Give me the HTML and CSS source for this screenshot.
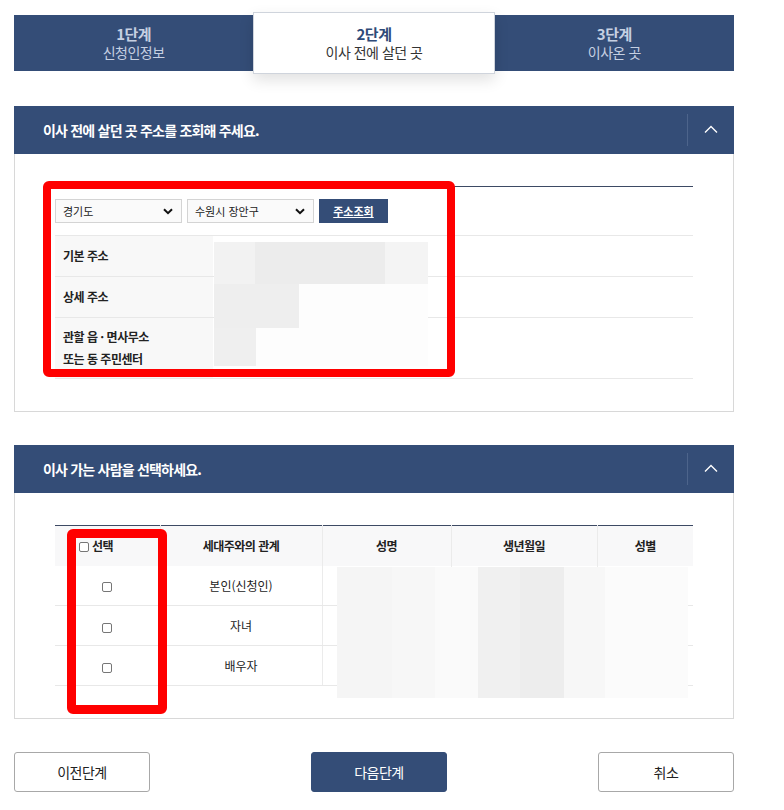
FILE: index.html
```html
<!DOCTYPE html>
<html lang="ko">
<head>
<meta charset="utf-8">
<title>전입신고</title>
<link rel="stylesheet" href="styles.css">
</head>
<body>
<div class="page">
  <div class="steps">
    <div class="step"><strong>1단계</strong><span>신청인정보</span></div>
    <div class="step active"><strong>2단계</strong><span>이사 전에 살던 곳</span></div>
    <div class="step"><strong>3단계</strong><span>이사온 곳</span></div>
  </div>

  <section class="panel">
    <div class="panel-head">
      <h2>이사 전에 살던 곳 주소를 조회해 주세요.</h2>
      <div class="toggle"><svg width="14" height="8" viewBox="0 0 14 8"><path d="M1 7.5L7 1.5L13 7.5" fill="none" stroke="#fff" stroke-width="1.4"/></svg></div>
    </div>
    <div class="panel-body p1">
      <div class="addr">
        <div class="addr-search">
          <div class="sel"><span>경기도</span><svg width="10" height="7" viewBox="0 0 10 7"><path d="M1 1.2L5 5.2L9 1.2" fill="none" stroke="#111" stroke-width="2"/></svg></div>
          <div class="sel"><span>수원시 장안구</span><svg width="10" height="7" viewBox="0 0 10 7"><path d="M1 1.2L5 5.2L9 1.2" fill="none" stroke="#111" stroke-width="2"/></svg></div>
          <button class="btn-search" type="button">주소조회</button>
        </div>
        <div class="addr-row"><div class="th">기본 주소</div><div class="td"></div></div>
        <div class="addr-row"><div class="th">상세 주소</div><div class="td"></div></div>
        <div class="addr-row tall"><div class="th">관할 읍 · 면사무소<br>또는 동 주민센터</div><div class="td"></div></div>

        <div class="redact r1">
          <i style="left:0;top:0;width:41px;height:42px;background:#f2f2f2"></i>
          <i style="left:41px;top:0;width:130px;height:42px;background:#ececec"></i>
          <i style="left:171px;top:0;width:43px;height:42px;background:#f4f4f4"></i>
          <i style="left:0;top:42px;width:85px;height:44px;background:#eeeeee"></i>
          <i style="left:0;top:86px;width:42px;height:38px;background:#efefef"></i>
        </div>
        <div class="mark m1"></div>
      </div>
    </div>
  </section>

  <section class="panel">
    <div class="panel-head">
      <h2>이사 가는 사람을 선택하세요.</h2>
      <div class="toggle"><svg width="14" height="8" viewBox="0 0 14 8"><path d="M1 7.5L7 1.5L13 7.5" fill="none" stroke="#fff" stroke-width="1.4"/></svg></div>
    </div>
    <div class="panel-body p2">
      <div class="people">
        <table>
          <colgroup>
            <col class="c1"><col class="c2"><col class="c3"><col class="c4"><col class="c5">
          </colgroup>
          <thead>
            <tr>
              <th class="sel-all"><input type="checkbox" class="chk"><span>선택</span></th>
              <th>세대주와의 관계</th>
              <th>성명</th>
              <th>생년월일</th>
              <th>성별</th>
            </tr>
          </thead>
          <tbody>
            <tr><td><input type="checkbox" class="chk"></td><td>본인(신청인)</td><td></td><td></td><td></td></tr>
            <tr><td><input type="checkbox" class="chk"></td><td>자녀</td><td></td><td></td><td></td></tr>
            <tr><td><input type="checkbox" class="chk"></td><td>배우자</td><td></td><td></td><td></td></tr>
          </tbody>
        </table>
        <div class="redact r2">
          <i style="left:0;top:0;width:55px;height:131px;background:#f5f5f5"></i>
          <i style="left:55px;top:0;width:43px;height:131px;background:#f7f7f7"></i>
          <i style="left:98px;top:0;width:43px;height:131px;background:#fafafa"></i>
          <i style="left:141px;top:0;width:42px;height:131px;background:#f0f0f0"></i>
          <i style="left:183px;top:0;width:44px;height:131px;background:#ededed"></i>
          <i style="left:227px;top:0;width:41px;height:131px;background:#f7f7f7"></i>
          <i style="left:268px;top:0;width:83px;height:131px;background:#fbfbfb"></i>
        </div>
        <div class="mark m2"></div>
      </div>
    </div>
  </section>

  <div class="actions">
    <button class="btn" type="button">이전단계</button>
    <button class="btn primary" type="button">다음단계</button>
    <button class="btn" type="button">취소</button>
  </div>
</div>
</body>
</html>
```

FILE: styles.css
```css
* { box-sizing: border-box; }
html, body { margin: 0; padding: 0; background: #fff; }
body {
  font-family: "Noto Sans CJK KR", "Noto Sans", sans-serif;
  color: #222;
  width: 784px;
}
.page {
  width: 720px;
  margin-left: 14px;
  padding-top: 15px;
}

/* steps */
.steps {
  display: flex;
  height: 56px;
  background: #344d77;
}
.step {
  flex: 1;
  display: flex;
  flex-direction: column;
  align-items: center;
  justify-content: center;
  color: #c6d0e2;
  line-height: 19px;
  letter-spacing: -0.5px;
}
.step strong { font-size: 15px; font-weight: 700; }
.step span { font-size: 14px; }
.step.active {
  background: #fff;
  margin: -3px 0;
  border: 1px solid #cfd4dc;
  box-shadow: 0 6px 14px rgba(0, 0, 0, 0.12);
  color: #333;
  position: relative;
  z-index: 1;
}
.step.active strong { color: #2e4a78; }

/* panels */
.panel { margin-top: 35px; }
.panel + .panel { margin-top: 33px; }
.panel-head {
  height: 48px;
  background: #344d77;
  display: flex;
  align-items: center;
  padding-left: 29px;
}
.panel-head h2 {
  flex: 1;
  margin: 0;
  font-size: 14px;
  font-weight: 700;
  color: #fff;
  letter-spacing: -0.8px;
}
.toggle {
  width: 47px;
  height: 32px;
  border-left: 1px solid #4d648b;
  display: flex;
  align-items: center;
  justify-content: center;
}
.toggle svg { margin-top: -2px; }
.panel-body {
  border: 1px solid #d8d8d8;
  border-top: 0;
  padding: 32px 40px 32px 40px;
}

/* address table */
.addr {
  position: relative;
  border-top: 1px solid #3d4a64;
}
.addr-search {
  height: 49px;
  display: flex;
  align-items: center;
  gap: 5px;
  border-bottom: 1px solid #e8e8e8;
}
.sel {
  width: 127px;
  height: 24px;
  border: 1px solid #d4d4d4;
  background: #fafafa;
  display: flex;
  align-items: center;
  justify-content: space-between;
  padding: 0 8px 0 7px;
  font-size: 11px;
  color: #222;
}
.btn-search {
  width: 69px;
  height: 24px;
  border: 0;
  background: #344d77;
  color: #fff;
  font-family: inherit;
  font-size: 11px;
  font-weight: 700;
  text-decoration: underline;
  padding: 0;
}
.addr-row {
  display: flex;
  height: 41px;
  border-bottom: 1px solid #e8e8e8;
}
.addr-row.tall { height: 61px; }
.addr-row .th {
  width: 158px;
  background: #f8f8f8;
  padding-left: 8px;
  display: flex;
  align-items: center;
  font-size: 12px;
  font-weight: 700;
  color: #222;
  line-height: 22px;
  letter-spacing: -0.5px;
}
.addr-row .td { flex: 1; }

.redact {
  position: absolute;
  background: #fdfdfd;
}
.redact i { position: absolute; display: block; }
.r1 { left: 159px; top: 55px; width: 214px; height: 124px; }
.r2 { left: 282px; top: 42px; width: 351px; height: 131px; }

.mark {
  position: absolute;
  border: 8px solid #ff0000;
  border-radius: 6px;
}
.m1 { left: -12px; top: -6px; width: 412px; height: 196px; }
.m2 { left: 12px; top: 4px; width: 100px; height: 185px; border-width: 9px; }

/* people table */
.people { position: relative; }
.people table {
  width: 638px;
  border-collapse: collapse;
  border-top: 1px solid #3d4a64;
  font-size: 12px;
}
col.c1 { width: 105px; }
col.c2 { width: 162px; }
col.c3 { width: 129px; }
col.c4 { width: 146px; }
col.c5 { width: 96px; }
.people th {
  height: 40px;
  background: #f8f8f9;
  font-weight: 700;
  color: #222;
  border-left: 1px solid #ebebeb;
  letter-spacing: -0.5px;
  padding: 0;
}
.people th:first-child, .people td:first-child { border-left: 0; }
.people th.sel-all {
  text-align: left;
  padding-left: 24px;
}
.sel-all .chk { margin-right: 3px; vertical-align: -1px; }
.people td {
  height: 40px;
  border-left: 1px solid #ebebeb;
  border-bottom: 1px solid #e8e8e8;
  text-align: center;
  color: #222;
  padding: 0;
}
.chk {
  appearance: none;
  -webkit-appearance: none;
  width: 10px;
  height: 10px;
  margin: 0;
  border: 1px solid #767676;
  border-radius: 2px;
  background: #fff;
  vertical-align: middle;
}

/* actions */
.actions {
  margin-top: 33px;
  display: flex;
  justify-content: space-between;
}
.btn {
  width: 136px;
  height: 40px;
  border: 1px solid #a8a8a8;
  border-radius: 3px;
  background: #fff;
  color: #222;
  font-family: inherit;
  font-size: 14px;
  letter-spacing: -0.5px;
  padding: 0;
}
.btn.primary {
  background: #344d77;
  border-color: #344d77;
  color: #fff;
  margin-left: 10px;
}
```
